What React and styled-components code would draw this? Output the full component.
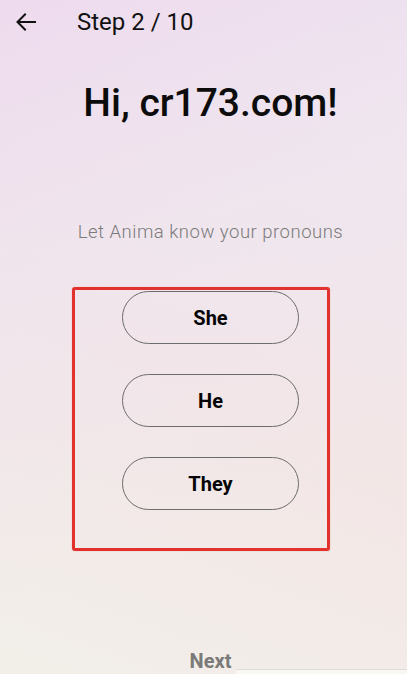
import React, { useState } from "react";
import styled, { createGlobalStyle } from "styled-components";

const GlobalStyle = createGlobalStyle`
    html, body {
        margin: 0;
        padding: 0;
    }
    body {
        font-family: Roboto, "Noto Sans", "Liberation Sans", sans-serif;
    }
`

const Screen = styled.div`
    position: relative;
    width: 407px;
    height: 674px;
    box-sizing: border-box;
    padding-left: 14px;
    overflow: hidden;
    display: flex;
    flex-direction: column;
    align-items: center;
    background:
        linear-gradient(160deg, rgba(238, 218, 238, 0.9) 0%, rgba(238, 228, 240, 0.6) 35%, rgba(241, 238, 233, 0) 75%),
        linear-gradient(200deg, #efeaf0 0%, #f3e6e6 55%, #f2efe9 100%);
`

const TopBar = styled.div`
    align-self: stretch;
    margin-left: -14px;
    display: flex;
    align-items: center;
    height: 44px;
    padding-left: 14px;
    gap: 39px;
`

const BackButton = styled.button`
    border: none;
    background: none;
    padding: 0;
    width: 24px;
    height: 24px;
    display: flex;
    align-items: center;
    justify-content: center;
    color: #111;
`

const StepLabel = styled.span`
    font-size: 24px;
    line-height: 44px;
    color: #111;
`

const Title = styled.h1`
    margin: 36px 0 0;
    font-size: 39px;
    line-height: 46px;
    font-weight: 500;
    color: #0c0c0c;
`

const Subtitle = styled.p`
    margin: 95px 0 0;
    font-size: 18.5px;
    line-height: 22px;
    font-weight: 300;
    letter-spacing: 0.5px;
    color: #7b7b7b;
`

const Choices = styled.div`
    margin: 44px 20px 0 0;
    width: 232px;
    height: 257px;
    box-sizing: content-box;
    border: 3px solid #e2322d;
    border-radius: 3px;
    box-shadow: 0 0 1px rgba(226, 50, 45, 0.6);
    display: flex;
    flex-direction: column;
    align-items: center;
    gap: 30px;
    padding: 1px 0 0 20px;
`

const Choice = styled.button`
    flex-shrink: 0;
    width: 177px;
    height: 53px;
    border-radius: 27px;
    border: 1.6px solid ${p => (p.$active ? "#333" : "#6c6c6c")};
    background: ${p => (p.$active ? "rgba(255,255,255,0.35)" : "transparent")};
    font-family: Roboto, "Noto Sans", "Liberation Sans", sans-serif;
    font-size: 20px;
    font-weight: 700;
    color: #050505;
    cursor: pointer;
`

const NextButton = styled.button`
    margin-top: 98px;
    border: none;
    background: none;
    padding: 0;
    font-family: Roboto, "Noto Sans", "Liberation Sans", sans-serif;
    font-size: 20px;
    line-height: 24px;
    font-weight: 700;
    color: #7a7a78;
`

const BottomEdge = styled.div`
    position: absolute;
    left: 236px;
    right: 0;
    bottom: 0;
    height: 4px;
    background: #f8f7f4;
    border-top: 1px solid #dedcd8;
`

const pronouns = ["She", "He", "They"]

const App = () => {
    const [picked, setPicked] = useState(null)

    return (
        <Screen>
            <GlobalStyle />
            <TopBar>
                <BackButton aria-label="back">
                    <svg width="24" height="24" viewBox="0 0 24 24" fill="none" stroke="currentColor" strokeWidth="2" strokeLinecap="square">
                        <path d="M21 12H4.5" />
                        <path d="M11 4.5L3.5 12L11 19.5" />
                    </svg>
                </BackButton>
                <StepLabel>Step 2 / 10</StepLabel>
            </TopBar>
            <Title>Hi, cr173.com!</Title>
            <Subtitle>Let Anima know your pronouns</Subtitle>
            <Choices>
                {pronouns.map(p => (
                    <Choice key={p} $active={picked === p} onClick={() => setPicked(p)}>{p}</Choice>
                ))}
            </Choices>
            <NextButton>Next</NextButton>
            <BottomEdge />
        </Screen>
    )
}

export default App;
